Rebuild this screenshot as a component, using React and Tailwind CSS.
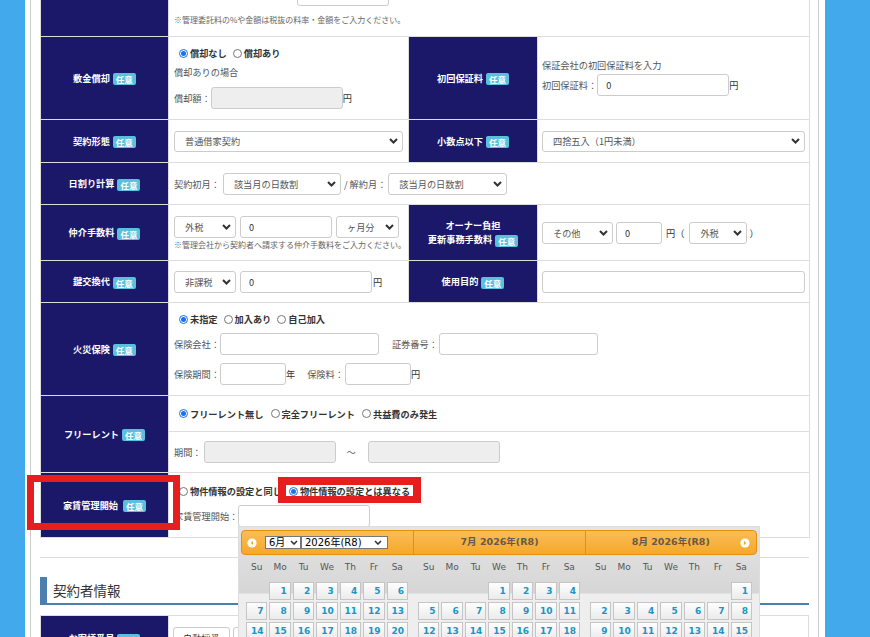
import React from 'react';

const Badge = ({ className = 'ml-[3px]' }) => (
    <span className={`${className} inline-block rounded-[2px] bg-[#5bc0de] px-[3px] align-middle text-[8.5px] font-bold leading-[12px] text-white`}>
        任意
    </span>
);

const Th = ({ children }) => (
    <th className="border border-[#ddd] bg-[#1b186a] p-0 text-center align-middle text-[9.2px] font-bold leading-[14px] text-white">
        {children}
    </th>
);

const Td = ({ children, className = '', colSpan }) => (
    <td colSpan={colSpan} className={`border border-[#ddd] ${className}`}>
        {children}
    </td>
);

const Radio = ({ checked, children }) => (
    <span className="inline-flex items-center font-bold text-[#333]">
        {checked ? (
            <span className="mr-[2px] flex h-[9px] w-[9px] items-center justify-center rounded-full border border-[#1a73e8] bg-white">
                <span className="h-[5px] w-[5px] rounded-full bg-[#1a73e8]" />
            </span>
        ) : (
            <span className="mr-[2px] h-[9px] w-[9px] rounded-full border border-[#767676] bg-white" />
        )}
        {children}
    </span>
);

const Select = ({ children, className = '' }) => (
    <div className={`flex shrink-0 items-center justify-between rounded-[3px] border border-[#ccc] bg-white pl-[10px] pr-[4px] text-[#555] ${className}`}>
        <span className="whitespace-nowrap">{children}</span>
        <svg width="9" height="6" viewBox="0 0 9 6" className="shrink-0">
            <path d="M1 1l3.5 3.5L8 1" fill="none" stroke="#333" strokeWidth="2" />
        </svg>
    </div>
);

const Field = ({ value = '', gray, className = '' }) => (
    <input
        readOnly
        value={value}
        className={`shrink-0 rounded-[3px] border border-[#ccc] px-[8px] text-[#333] outline-none ${gray ? 'bg-[#eee]' : 'bg-white'} ${className}`}
    />
);

// June / July / August 2026 — first weekday index (Su = 0)
const months = [
    { start: 1, days: 30 },
    { start: 3, days: 31 },
    { start: 6, days: 31 },
];
const weekdays = ['Su', 'Mo', 'Tu', 'We', 'Th', 'Fr', 'Sa'];

const Month = ({ start, days }) => {
    const cells = [...Array(start).fill(null), ...Array.from({ length: days }, (_, i) => i + 1)];
    return (
        <div className="px-[5px]">
            <div className="grid h-[26px] grid-cols-7 items-center gap-x-[2px] text-center text-[9px] text-[#555]">
                {weekdays.map((d) => (
                    <span key={d}>{d}</span>
                ))}
            </div>
            <div className="mt-[1px] grid grid-cols-7 gap-[2px]">
                {cells.map((d, i) =>
                    d ? (
                        <div
                            key={i}
                            className="h-[18px] border border-[#c5c5c5] bg-[linear-gradient(#fefefe,#ebebeb)] pr-[3px] text-right text-[9px] font-bold leading-[16px] text-[#1c94c4]"
                        >
                            {d}
                        </div>
                    ) : (
                        <div key={i} className="h-[18px]" />
                    )
                )}
            </div>
        </div>
    );
};

const Arrow = ({ dir }) => (
    <svg width="10" height="10" viewBox="0 0 10 10" className="shrink-0">
        <circle cx="5" cy="5" r="4.6" fill="#fff" />
        {dir === 'prev' ? <path d="M6 3L3.6 5 6 7z" fill="#f6a828" /> : <path d="M4 3l2.4 2L4 7z" fill="#f6a828" />}
    </svg>
);

const Calendar = () => (
    <div className="absolute left-[238px] top-[526px] h-[140px] w-[522px] border border-[#ddd] bg-[linear-gradient(#e4e4e4_0px,#d6d6d6_66px,#eeeeee_67px)] px-[2px] pt-[3px] font-['DejaVu_Sans','Noto_Sans_CJK_JP',sans-serif]">
        <div className="grid h-[25px] grid-cols-3 rounded-[4px] border border-[#e78f08] bg-[linear-gradient(#f9bd5a,#f6a828)] text-[9.5px] font-bold text-[#665a48]">
            <div className="flex items-center pl-[5px]">
                <Arrow dir="prev" />
                <div className="ml-[8px] flex h-[13px] w-[36px] items-center justify-between border border-[#777] bg-white pl-[3px] pr-[2px] text-[10px] font-normal text-black">
                    6月
                    <svg width="8" height="5" viewBox="0 0 8 5"><path d="M1 1l3 3 3-3" fill="none" stroke="#333" strokeWidth="1.6" /></svg>
                </div>
                <div className="flex h-[13px] w-[87px] items-center justify-between border border-[#777] bg-white pl-[3px] pr-[5px] text-[10px] font-normal text-black">
                    2026年(R8)
                    <svg width="8" height="5" viewBox="0 0 8 5"><path d="M1 1l3 3 3-3" fill="none" stroke="#333" strokeWidth="1.6" /></svg>
                </div>
            </div>
            <div className="flex items-center justify-center border-l border-[#e78f08]">7月 2026年(R8)</div>
            <div className="relative flex items-center justify-center border-l border-[#e78f08]">
                8月 2026年(R8)
                <span className="absolute right-[6px] top-[7px] flex">
                    <Arrow dir="next" />
                </span>
            </div>
        </div>
        <div className="grid grid-cols-3">
            {months.map((m, i) => (
                <Month key={i} {...m} />
            ))}
        </div>
    </div>
);

const App = () => {
    return (
        <div className="relative h-[637px] w-[870px] overflow-hidden bg-[#42a9ec] font-['Noto_Sans_CJK_JP',sans-serif]">
            <div className="ml-[25px] flex h-full w-[800px] bg-white pl-[5px]">
                <div className="flex h-full w-[789px] flex-col border-x border-[#ccc] px-[9px]">
                    <table className="-mt-[24px] w-[769px] table-fixed border-collapse text-[9.2px] leading-[14px] text-[#555]">
                        <colgroup>
                            <col className="w-[128px]" />
                            <col className="w-[240px]" />
                            <col className="w-[129px]" />
                            <col className="w-[272px]" />
                        </colgroup>
                        <tbody>
                            <tr className="h-[60px]">
                                <Th />
                                <Td colSpan={3} className="px-[5px] pb-[10px] align-bottom">
                                    <Field className="ml-[123px] block h-[22px] w-[92px]" />
                                    <div className="mt-[8px] text-[8px] leading-[12px] text-[#666]">
                                        ※管理委託料の%や金額は税抜の料率・金額をご入力ください。
                                    </div>
                                </Td>
                            </tr>

                            <tr className="h-[83px]">
                                <Th>敷金償却<Badge /></Th>
                                <Td className="px-[5px] pt-[9px] align-top">
                                    <div className="flex h-[14px] items-center gap-[6px] pl-[5px]">
                                        <Radio checked>償却なし</Radio>
                                        <Radio>償却あり</Radio>
                                    </div>
                                    <div className="mt-[5px]">償却ありの場合</div>
                                    <div className="mt-[8px] flex items-center">
                                        償却額：
                                        <Field gray className="h-[22px] w-[132px]" />
                                        <span className="text-[#333]">円</span>
                                    </div>
                                </Td>
                                <Th>初回保証料<Badge /></Th>
                                <Td className="px-[4px] pt-[21px] align-top">
                                    <div>保証会社の初回保証料を入力</div>
                                    <div className="mt-[2px] flex items-center">
                                        初回保証料：
                                        <Field value="0" className="h-[22px] w-[132px]" />
                                        <span className="text-[#333]">円</span>
                                    </div>
                                </Td>
                            </tr>

                            <tr className="h-[43px]">
                                <Th>契約形態<Badge /></Th>
                                <Td className="px-[5px] align-middle">
                                    <Select className="h-[21px] w-[229px]">普通借家契約</Select>
                                </Td>
                                <Th>小数点以下<Badge /></Th>
                                <Td className="px-[4px] align-middle">
                                    <Select className="h-[21px] w-[263px]">四捨五入（1円未満）</Select>
                                </Td>
                            </tr>

                            <tr className="h-[42px]">
                                <Th>日割り計算<Badge /></Th>
                                <Td colSpan={3} className="px-[5px] align-middle">
                                    <div className="flex items-center">
                                        契約初月：
                                        <Select className="ml-[3px] h-[22px] w-[118px]">該当月の日数割</Select>
                                        <span className="ml-[3px] mr-[2px]">/ 解約月：</span>
                                        <Select className="h-[22px] w-[119px]">該当月の日数割</Select>
                                    </div>
                                </Td>
                            </tr>

                            <tr className="h-[56px]">
                                <Th>仲介手数料<Badge /></Th>
                                <Td className="px-[5px] align-middle">
                                    <div className="flex items-center gap-[4px]">
                                        <Select className="h-[22px] w-[62px]">外税</Select>
                                        <Field value="0" className="h-[22px] w-[92px]" />
                                        <Select className="h-[22px] w-[63px]">ヶ月分</Select>
                                    </div>
                                    <div className="mt-[1px] whitespace-nowrap text-[8px] leading-[11px] text-[#666]">
                                        ※管理会社から契約者へ請求する仲介手数料をご入力ください。
                                    </div>
                                </Td>
                                <Th>
                                    オーナー負担
                                    <br />
                                    更新事務手数料<Badge />
                                </Th>
                                <Td className="px-[4px] align-middle">
                                    <div className="flex items-center">
                                        <Select className="h-[22px] w-[71px]">その他</Select>
                                        <Field value="0" className="ml-[3px] h-[22px] w-[46px]" />
                                        <span className="ml-[4px] text-[#333]">円（</span>
                                        <Select className="ml-[5px] h-[22px] w-[58px]">外税</Select>
                                        <span className="ml-[2px] text-[#333]">）</span>
                                    </div>
                                </Td>
                            </tr>

                            <tr className="h-[42px]">
                                <Th>鍵交換代<Badge /></Th>
                                <Td className="px-[5px] align-middle">
                                    <div className="flex items-center gap-[4px]">
                                        <Select className="h-[22px] w-[62px]">非課税</Select>
                                        <Field value="0" className="h-[22px] w-[132px]" />
                                        <span className="-ml-[3px] text-[#333]">円</span>
                                    </div>
                                </Td>
                                <Th>使用目的<Badge /></Th>
                                <Td className="px-[4px] align-middle">
                                    <Field className="block h-[22px] w-[263px]" />
                                </Td>
                            </tr>

                            <tr className="h-[93px]">
                                <Th>火災保険<Badge /></Th>
                                <Td colSpan={3} className="px-[5px] pt-[9px] align-top">
                                    <div className="flex h-[14px] items-center gap-[6px] pl-[5px]">
                                        <Radio checked>未指定</Radio>
                                        <Radio>加入あり</Radio>
                                        <Radio>自己加入</Radio>
                                    </div>
                                    <div className="mt-[7px] flex items-center">
                                        保険会社：
                                        <Field className="h-[22px] w-[159px]" />
                                        <span className="ml-[13px] mr-[1px]">証券番号：</span>
                                        <Field className="h-[22px] w-[159px]" />
                                    </div>
                                    <div className="mt-[8px] flex items-center">
                                        保険期間：
                                        <Field className="h-[22px] w-[66px]" />
                                        <span className="text-[#333]">年</span>
                                        <span className="ml-[12px] mr-[1px]">保険料：</span>
                                        <Field className="h-[22px] w-[66px]" />
                                        <span className="text-[#333]">円</span>
                                    </div>
                                </Td>
                            </tr>

                            <tr className="h-[77px]">
                                <Th>フリーレント<Badge /></Th>
                                <Td colSpan={3} className="p-0 align-top">
                                    <div className="flex h-[36px] items-center gap-[7px] border-b border-[#ddd] pl-[10px]">
                                        <Radio checked>フリーレント無し</Radio>
                                        <Radio>完全フリーレント</Radio>
                                        <Radio>共益費のみ発生</Radio>
                                    </div>
                                    <div className="flex h-[40px] items-center pl-[5px]">
                                        期間：
                                        <Field gray className="ml-[2px] h-[22px] w-[132px]" />
                                        <span className="ml-[11px]">〜</span>
                                        <Field gray className="ml-[12px] h-[22px] w-[132px]" />
                                    </div>
                                </Td>
                            </tr>

                            <tr className="h-[65px]">
                                <Th>家賃管理開始<Badge className="ml-[5px]" /></Th>
                                <Td colSpan={3} className="px-[5px] pt-[11px] align-top">
                                    <div className="flex h-[14px] items-center gap-[7px] pl-[5px]">
                                        <Radio>物件情報の設定と同じ</Radio>
                                        <Radio checked>物件情報の設定とは異なる</Radio>
                                    </div>
                                    <div className="mt-[7px] flex items-center">
                                        家賃管理開始：
                                        <Field className="h-[22px] w-[132px]" />
                                    </div>
                                </Td>
                            </tr>
                        </tbody>
                    </table>

                    <div className="mt-[19px] shrink-0 border-t border-[#ddd]" />

                    <div className="mt-[19px] flex h-[28px] shrink-0 items-center border-b-[2px] border-l-[7px] border-[#4a7fb0] pl-[6px] text-[13.5px] text-[#333]">
                        契約者情報
                    </div>

                    <table className="mt-[10px] w-[769px] shrink-0 table-fixed border-collapse text-[9.2px] leading-[14px] text-[#333]">
                        <colgroup>
                            <col className="w-[128px]" />
                            <col />
                        </colgroup>
                        <tbody>
                            <tr className="h-[46px]">
                                <Th>お客様番号<Badge /></Th>
                                <Td className="px-[4px] pt-[11px] align-top">
                                    <div className="flex gap-[3px]">
                                        <button className="h-[22px] rounded-[3px] border border-[#ccc] bg-white px-[9px]">自動採番</button>
                                        <button className="h-[22px] w-[60px] rounded-[3px] border border-[#ccc] bg-white" />
                                    </div>
                                </Td>
                            </tr>
                        </tbody>
                    </table>
                </div>
            </div>

            <div className="absolute left-[27px] top-[475px] h-[55px] w-[153px] border-[7px] border-[#e61e1e]" />
            <div className="absolute left-[278px] top-[477px] h-[26px] w-[143px] border-[8px] border-b-[7px] border-[#e61e1e]" />

            <Calendar />
        </div>
    );
};

export default App;
